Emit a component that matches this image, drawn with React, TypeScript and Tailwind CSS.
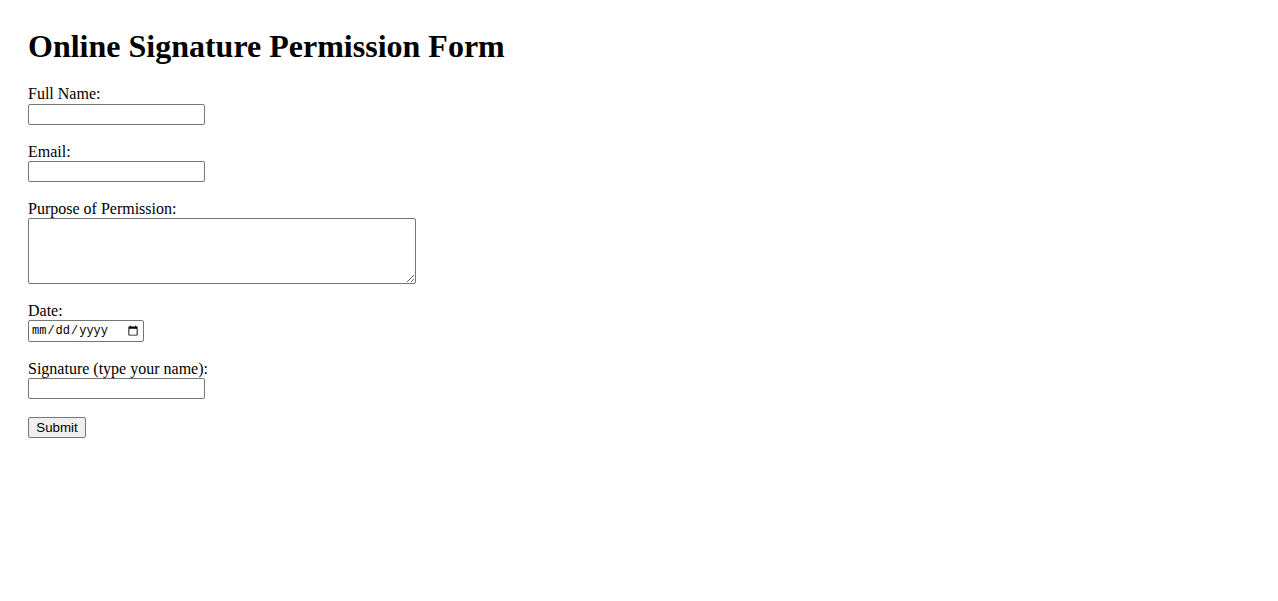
export default function App() {
  const label = "block text-[16px] leading-[17.7px]";
  const field =
    "block mt-[1px] h-[21px] w-[177px] rounded-[2px] border border-[#767676] bg-white px-[2px] py-[1px] font-['Liberation_Sans',sans-serif] text-[13.33px]";

  return (
    <div className="min-h-screen bg-white pl-[28px] pt-[28.5px] font-['Liberation_Serif',serif] text-black">
      <h1 className="mb-[21.4px] text-[32px] font-bold leading-[35.4px]">
        Online Signature Permission Form
      </h1>

      <form onSubmit={(e) => e.preventDefault()}>
        <div className="mb-[17.5px]">
          <label htmlFor="name" className={label}>
            Full Name:
          </label>
          <input id="name" type="text" className={field} />
        </div>

        <div className="mb-[17.5px]">
          <label htmlFor="email" className={label}>
            Email:
          </label>
          <input id="email" type="email" className={field} />
        </div>

        <div className="mb-[17.7px]">
          <label htmlFor="purpose" className={label}>
            Purpose of Permission:
          </label>
          <textarea
            id="purpose"
            className="mt-[0.5px] block h-[66px] w-[388px] rounded-[2px] border border-[#767676] bg-white px-[2px] py-[2px] font-['Liberation_Mono',monospace] text-[13.33px]"
          />
        </div>

        <div className="mb-[17.7px]">
          <label htmlFor="date" className={label}>
            Date:
          </label>
          <input
            id="date"
            type="date"
            className="mt-[0.6px] block h-[22px] w-[116px] rounded-[2px] border border-[#767676] bg-white px-[2px] py-[1px] font-['Liberation_Mono',monospace] text-[12px]"
          />
        </div>

        <div className="mb-[17.7px]">
          <label htmlFor="sig" className={label}>
            Signature (type your name):
          </label>
          <input id="sig" type="text" className={field} />
        </div>

        <button
          type="submit"
          className="block h-[21px] w-[58px] rounded-[2px] border border-[#767676] bg-[#efefef] px-[6px] font-['Liberation_Sans',sans-serif] text-[13.33px] leading-[15px]"
        >
          Submit
        </button>
      </form>
    </div>
  );
}
